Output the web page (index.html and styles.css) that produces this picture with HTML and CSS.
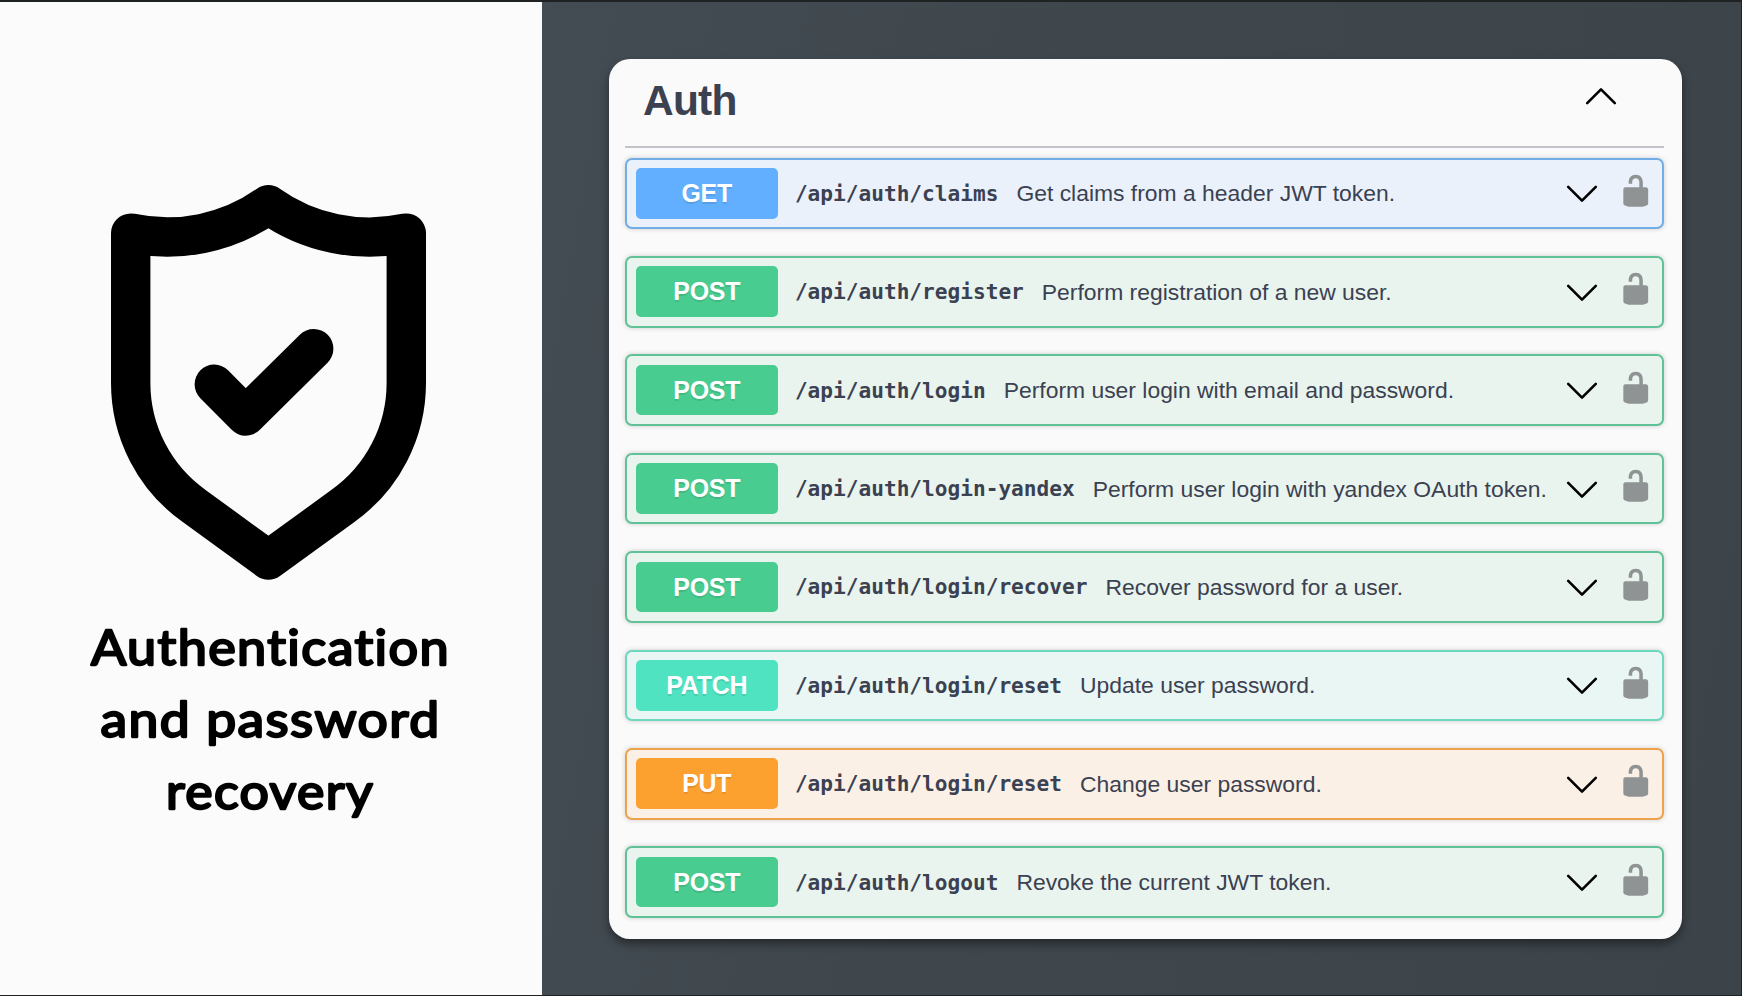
FILE: index.html
```html
<!DOCTYPE html>
<html lang="en">
<head>
<meta charset="utf-8">
<title>Authentication and password recovery</title>
<link rel="stylesheet" href="styles.css">
</head>
<body>
<svg class="defs" aria-hidden="true">
  <symbol id="unlocked" viewBox="0 0 20 20"><path d="M15.8 8H14V5.6C14 2.703 12.665 1 10 1 7.334 1 6 2.703 6 5.6V6h2v-.801C8 3.754 8.797 3 10 3c1.203 0 2 .754 2 2.199V8H4c-.553 0-1 .646-1 1.199V17c0 .549.428 1.139.951 1.307l1.197.387C5.672 18.861 6.55 19 7.1 19h5.8c.549 0 1.428-.139 1.951-.307l1.196-.387c.524-.167.953-.757.953-1.306V9.199C17 8.646 16.352 8 15.8 8z"/></symbol>
  <symbol id="chevron" viewBox="0 0 32 20"><path d="M2.2 2.8 16 16.6 29.8 2.8" fill="none" stroke="#000" stroke-width="2.6" stroke-linecap="round" stroke-linejoin="round"/></symbol>
</svg>
<div class="slide">
  <aside class="intro">
    <svg class="shield" viewBox="111 185 315 395" fill="none" stroke="#000" stroke-width="39.4" stroke-linecap="round" stroke-linejoin="round">
      <path d="M130.7 233.1A174 174 0 0 0 268.4 204.7 174 174 0 0 0 406.3 233.1V383A151 151 0 0 1 343 505.9L268.4 560 194 505.9A151 151 0 0 1 130.7 383Z"/>
      <path d="M214.3 384.3 245.7 416 313.7 348.7"/>
    </svg>
    <svg class="caption" viewBox="0 0 542 230">
      <text x="91" y="64.5" textLength="359" lengthAdjust="spacingAndGlyphs">Authentication</text>
      <text x="100.5" y="136.5" textLength="340" lengthAdjust="spacingAndGlyphs">and password</text>
      <text x="166" y="208.5" textLength="208" lengthAdjust="spacingAndGlyphs">recovery</text>
    </svg>
  </aside>
  <main class="stage">
    <section class="card">
      <header class="card-head">
        <h1>Auth</h1>
        <svg class="chevron up"><use href="#chevron"/></svg>
      </header>
      <div class="ops">
        <div class="op get"><span class="method">GET</span><code>/api/auth/claims</code><span class="desc">Get claims from a header JWT token.</span><svg class="chevron"><use href="#chevron"/></svg><svg class="lock"><use href="#unlocked"/></svg></div>
        <div class="op post"><span class="method">POST</span><code>/api/auth/register</code><span class="desc">Perform registration of a new user.</span><svg class="chevron"><use href="#chevron"/></svg><svg class="lock"><use href="#unlocked"/></svg></div>
        <div class="op post"><span class="method">POST</span><code>/api/auth/login</code><span class="desc">Perform user login with email and password.</span><svg class="chevron"><use href="#chevron"/></svg><svg class="lock"><use href="#unlocked"/></svg></div>
        <div class="op post"><span class="method">POST</span><code>/api/auth/login-yandex</code><span class="desc">Perform user login with yandex OAuth token.</span><svg class="chevron"><use href="#chevron"/></svg><svg class="lock"><use href="#unlocked"/></svg></div>
        <div class="op post"><span class="method">POST</span><code>/api/auth/login/recover</code><span class="desc">Recover password for a user.</span><svg class="chevron"><use href="#chevron"/></svg><svg class="lock"><use href="#unlocked"/></svg></div>
        <div class="op patch"><span class="method">PATCH</span><code>/api/auth/login/reset</code><span class="desc">Update user password.</span><svg class="chevron"><use href="#chevron"/></svg><svg class="lock"><use href="#unlocked"/></svg></div>
        <div class="op put"><span class="method">PUT</span><code>/api/auth/login/reset</code><span class="desc">Change user password.</span><svg class="chevron"><use href="#chevron"/></svg><svg class="lock"><use href="#unlocked"/></svg></div>
        <div class="op post"><span class="method">POST</span><code>/api/auth/logout</code><span class="desc">Revoke the current JWT token.</span><svg class="chevron"><use href="#chevron"/></svg><svg class="lock"><use href="#unlocked"/></svg></div>
      </div>
    </section>
  </main>
</div>
</body>
</html>
```
FILE: styles.css
```css
* { box-sizing: border-box; }
body { margin: 0; font-family: "Liberation Sans", Arial, sans-serif; color: #3b4151; }
.defs { display: none; }
.slide {
  display: flex;
  width: 1742px;
  height: 996px;
  overflow: hidden;
  border: solid #1f2223;
  border-width: 2px 1px 1px 0;
  background: #3e464c;
}
.intro {
  flex: none;
  width: 541.5px;
  padding-top: 183px;
  background: #fbfbfb;
}
.shield { display: block; width: 315px; height: 395px; margin-left: 111px; }
.caption { display: block; width: 542px; height: 230px; margin-top: 20px; }
.caption text {
  font: 400 49px Lato, sans-serif;
  font-variant-ligatures: none;
  letter-spacing: 1.3px;
  fill: #000;
  stroke: #000;
  stroke-width: 2.3px;
  stroke-linejoin: round;
}
.stage {
  flex: 1;
  padding: 57px 0 0 67.5px;
  background: linear-gradient(100deg, #444c53, #3f474d 40%, #3c444a);
}
.card {
  width: 1073.4px;
  height: 879.5px;
  padding: 0 18.4px 0 16px;
  border-radius: 21px;
  background: #fafafa;
  box-shadow: 0 5px 9px rgba(20, 22, 22, .6);
}
.card-head {
  display: flex;
  justify-content: space-between;
  height: 89px;
  padding: 17px 47px 0 18px;
  border-bottom: 2px solid #c1c3c8;
}
h1 { margin: 0; font-size: 42.5px; line-height: 49px; letter-spacing: -.8px; }
.chevron { flex: none; width: 32px; height: 20px; }
.up { transform: rotate(180deg); margin-top: 10px; }
.ops {
  display: flex;
  flex-direction: column;
  justify-content: space-between;
  height: 760.5px;
  margin-top: 9.5px;
}
.op {
  display: flex;
  align-items: center;
  height: 71.6px;
  padding: 0 9px;
  border: 2px solid var(--line);
  border-radius: 7px;
  background: var(--tint);
  box-shadow: 0 0 5px rgba(0, 0, 0, .19);
}
.method {
  flex: none;
  width: 141.5px;
  height: 50.5px;
  border-radius: 5px;
  background: var(--solid);
  color: #fff;
  font-size: 24.9px;
  font-weight: 700;
  line-height: 50.5px;
  letter-spacing: -.2px;
  text-align: center;
  text-shadow: 0 2px 0 rgba(0, 0, 0, .1);
}
code {
  flex: none;
  margin-left: 17.4px;
  font: 700 21.14px "DejaVu Sans Mono", monospace;
}
.desc { flex: none; margin: 1px 0 0 18px; font-size: 22.9px; white-space: nowrap; }
.op .chevron { margin: 2px 20px 0 auto; }
.lock { flex: none; width: 35.5px; height: 35.5px; margin: -5px -.5px 0 0; fill: #8f9394; }
.get { --solid: #61affe; --line: #72ade6; --tint: #eaf1fb; }
.post { --solid: #49cc90; --line: #62c297; --tint: #e9f4ee; }
.patch { --solid: #50e3c2; --line: #6ed8bf; --tint: #e9f6f4; }
.put { --solid: #fca130; --line: #eda34c; --tint: #fbf0e6; }
```
